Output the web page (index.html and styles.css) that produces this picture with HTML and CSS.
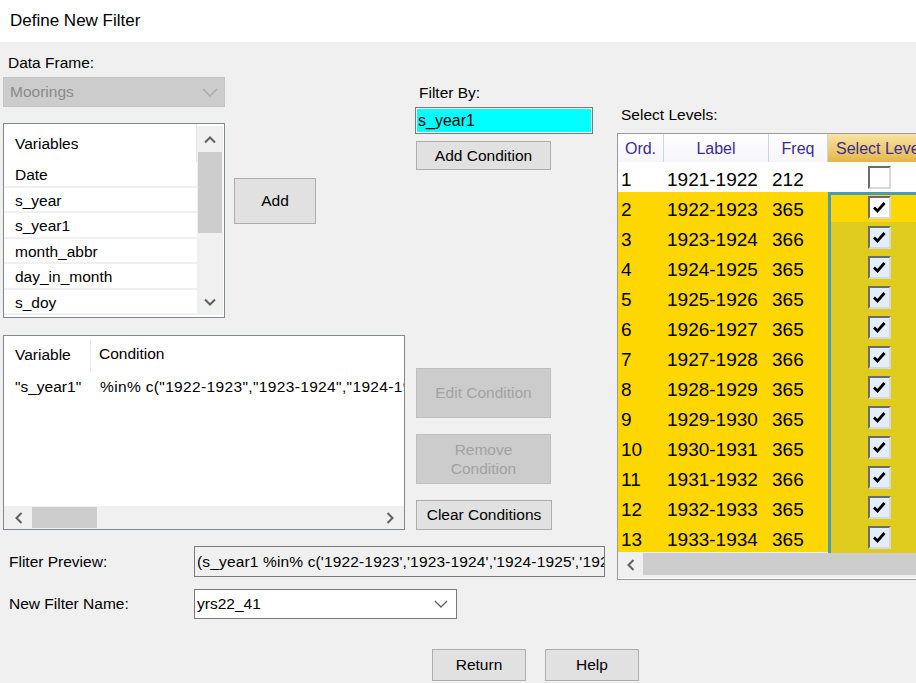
FILE: index.html
```html
<!DOCTYPE html>
<html>
<head>
<meta charset="utf-8">
<title>Define New Filter</title>
<link rel="stylesheet" href="styles.css">
</head>
<body>
<div class="titlebar">Define New Filter</div>
<div class="main">
  <div class="col-left">
    <div class="lbl lbl-df">Data Frame:</div>
    <div class="combo combo-df">
      <span class="combo-text">Moorings</span>
      <svg class="chev-down" width="16" height="9" viewBox="0 0 16 9"><polyline points="1,1 8,8 15,1" fill="none" stroke="#a8a8a8" stroke-width="1.3"/></svg>
    </div>
    <div class="var-row">
      <div class="listbox varlist">
        <div class="vl-content">
          <div class="vl-header">Variables</div>
          <div class="vl-item">Date</div>
          <div class="vl-item">s_year</div>
          <div class="vl-item">s_year1</div>
          <div class="vl-item">month_abbr</div>
          <div class="vl-item">day_in_month</div>
          <div class="vl-item">s_doy</div>
        </div>
        <div class="vscroll">
          <div class="vs-arrow"><svg width="14" height="9" viewBox="0 0 14 9"><polyline points="2,7.5 7,2.5 12,7.5" fill="none" stroke="#606060" stroke-width="2"/></svg></div>
          <div class="vs-thumb"></div>
          <div class="vs-space"></div>
          <div class="vs-arrow"><svg width="14" height="9" viewBox="0 0 14 9"><polyline points="2,1.5 7,6.5 12,1.5" fill="none" stroke="#606060" stroke-width="2"/></svg></div>
        </div>
      </div>
      <div class="btn btn-add">Add</div>
    </div>
    <div class="listbox condlist">
      <div class="cl-header">
        <div class="cl-c1">Variable</div>
        <div class="cl-c2">Condition</div>
      </div>
      <div class="cl-row">
        <div class="cl-c1">"s_year1"</div>
        <div class="cl-c2"><span class="cl-cond">%in% c("1922-1923","1923-1924","1924-1925","1925-1926")</span></div>
      </div>
      <div class="cl-space"></div>
      <div class="hscroll">
        <div class="hs-arrow"><svg width="9" height="14" viewBox="0 0 9 14"><polyline points="7.5,2 2.5,7 7.5,12" fill="none" stroke="#606060" stroke-width="2"/></svg></div>
        <div class="hs-thumb"></div>
        <div class="hs-space"></div>
        <div class="hs-arrow"><svg width="9" height="14" viewBox="0 0 9 14"><polyline points="1.5,2 6.5,7 1.5,12" fill="none" stroke="#606060" stroke-width="2"/></svg></div>
      </div>
    </div>
  </div>

  <div class="col-mid">
    <div class="lbl lbl-fb">Filter By:</div>
    <div class="cyanbox">s_year1</div>
    <div class="btn btn-addcond">Add Condition</div>
    <div class="btn btn-dis btn-edit">Edit Condition</div>
    <div class="btn btn-dis btn-remove">Remove<br>Condition</div>
    <div class="btn btn-clear">Clear Conditions</div>
  </div>

  <div class="col-right">
    <div class="lbl lbl-sl">Select Levels:</div>
    <div class="dg">
      <div class="dg-head">
        <div class="dh">Ord.</div>
        <div class="dh">Label</div>
        <div class="dh">Freq</div>
        <div class="dh dh-sel">Select Levels</div>
      </div>
      <div class="dg-row r-white">
        <div class="dc">1</div><div class="dc">1921-1922</div><div class="dc">212</div>
        <div class="dc dc-sel"><span class="cb"></span></div>
      </div>
      <div class="dg-row r-gold r-current">
        <div class="dc">2</div><div class="dc">1922-1923</div><div class="dc">365</div>
        <div class="dc dc-sel"><span class="cb cb-white"><svg width="19" height="19" viewBox="0 0 19 19"><polyline points="4,9.5 7.5,13 14.5,5" fill="none" stroke="#000" stroke-width="2.8"/></svg></span></div>
      </div>
      <div class="dg-row r-gold">
        <div class="dc">3</div><div class="dc">1923-1924</div><div class="dc">366</div>
        <div class="dc dc-sel"><span class="cb cb-on"><svg width="19" height="19" viewBox="0 0 19 19"><polyline points="4,9.5 7.5,13 14.5,5" fill="none" stroke="#000" stroke-width="2.8"/></svg></span></div>
      </div>
      <div class="dg-row r-gold">
        <div class="dc">4</div><div class="dc">1924-1925</div><div class="dc">365</div>
        <div class="dc dc-sel"><span class="cb cb-on"><svg width="19" height="19" viewBox="0 0 19 19"><polyline points="4,9.5 7.5,13 14.5,5" fill="none" stroke="#000" stroke-width="2.8"/></svg></span></div>
      </div>
      <div class="dg-row r-gold">
        <div class="dc">5</div><div class="dc">1925-1926</div><div class="dc">365</div>
        <div class="dc dc-sel"><span class="cb cb-on"><svg width="19" height="19" viewBox="0 0 19 19"><polyline points="4,9.5 7.5,13 14.5,5" fill="none" stroke="#000" stroke-width="2.8"/></svg></span></div>
      </div>
      <div class="dg-row r-gold">
        <div class="dc">6</div><div class="dc">1926-1927</div><div class="dc">365</div>
        <div class="dc dc-sel"><span class="cb cb-on"><svg width="19" height="19" viewBox="0 0 19 19"><polyline points="4,9.5 7.5,13 14.5,5" fill="none" stroke="#000" stroke-width="2.8"/></svg></span></div>
      </div>
      <div class="dg-row r-gold">
        <div class="dc">7</div><div class="dc">1927-1928</div><div class="dc">366</div>
        <div class="dc dc-sel"><span class="cb cb-on"><svg width="19" height="19" viewBox="0 0 19 19"><polyline points="4,9.5 7.5,13 14.5,5" fill="none" stroke="#000" stroke-width="2.8"/></svg></span></div>
      </div>
      <div class="dg-row r-gold">
        <div class="dc">8</div><div class="dc">1928-1929</div><div class="dc">365</div>
        <div class="dc dc-sel"><span class="cb cb-on"><svg width="19" height="19" viewBox="0 0 19 19"><polyline points="4,9.5 7.5,13 14.5,5" fill="none" stroke="#000" stroke-width="2.8"/></svg></span></div>
      </div>
      <div class="dg-row r-gold">
        <div class="dc">9</div><div class="dc">1929-1930</div><div class="dc">365</div>
        <div class="dc dc-sel"><span class="cb cb-on"><svg width="19" height="19" viewBox="0 0 19 19"><polyline points="4,9.5 7.5,13 14.5,5" fill="none" stroke="#000" stroke-width="2.8"/></svg></span></div>
      </div>
      <div class="dg-row r-gold">
        <div class="dc">10</div><div class="dc">1930-1931</div><div class="dc">365</div>
        <div class="dc dc-sel"><span class="cb cb-on"><svg width="19" height="19" viewBox="0 0 19 19"><polyline points="4,9.5 7.5,13 14.5,5" fill="none" stroke="#000" stroke-width="2.8"/></svg></span></div>
      </div>
      <div class="dg-row r-gold">
        <div class="dc">11</div><div class="dc">1931-1932</div><div class="dc">366</div>
        <div class="dc dc-sel"><span class="cb cb-on"><svg width="19" height="19" viewBox="0 0 19 19"><polyline points="4,9.5 7.5,13 14.5,5" fill="none" stroke="#000" stroke-width="2.8"/></svg></span></div>
      </div>
      <div class="dg-row r-gold">
        <div class="dc">12</div><div class="dc">1932-1933</div><div class="dc">365</div>
        <div class="dc dc-sel"><span class="cb cb-on"><svg width="19" height="19" viewBox="0 0 19 19"><polyline points="4,9.5 7.5,13 14.5,5" fill="none" stroke="#000" stroke-width="2.8"/></svg></span></div>
      </div>
      <div class="dg-row r-gold">
        <div class="dc">13</div><div class="dc">1933-1934</div><div class="dc">365</div>
        <div class="dc dc-sel"><span class="cb cb-on"><svg width="19" height="19" viewBox="0 0 19 19"><polyline points="4,9.5 7.5,13 14.5,5" fill="none" stroke="#000" stroke-width="2.8"/></svg></span></div>
      </div>
      <div class="dg-hscroll">
        <div class="dgs-arrow"><svg width="9" height="14" viewBox="0 0 9 14"><polyline points="7.5,2 2.5,7 7.5,12" fill="none" stroke="#606060" stroke-width="2"/></svg></div>
        <div class="dgs-thumb"></div>
      </div>
    </div>
  </div>

  <div class="row-preview">
    <div class="row-lbl">Fliter Preview:</div>
    <div class="previewbox"><span class="pv-text">(s_year1 %in% c('1922-1923','1923-1924','1924-1925','1925-1926'))</span></div>
  </div>
  <div class="row-name">
    <div class="row-lbl">New Filter Name:</div>
    <div class="combo combo-name">
      <span class="combo-text">yrs22_41</span>
      <svg class="chev-down" width="14" height="8" viewBox="0 0 14 8"><polyline points="1,1 7,7 13,1" fill="none" stroke="#606060" stroke-width="1.3"/></svg>
    </div>
  </div>
</div>
<div class="footer">
  <div class="btn btn-foot">Return</div>
  <div class="btn btn-foot">Help</div>
</div>
</body>
</html>
```

FILE: styles.css
```css
* { box-sizing: border-box; }
html, body { margin: 0; padding: 0; }
body {
  width: 916px;
  height: 683px;
  overflow: hidden;
  background: #f0f0f0;
  font-family: "Liberation Sans", Arial, sans-serif;
  font-size: 15.5px;
  color: #000;
}
.titlebar {
  height: 42px;
  background: #fff;
  line-height: 41px;
  padding-left: 10px;
  font-size: 17px;
}
.main {
  display: grid;
  grid-template-columns: 402px 212px 299px;
  padding-left: 3px;
  align-items: start;
}
.col-left { grid-column: 1; grid-row: 1; padding-top: 12px; }
.col-mid { grid-column: 2; grid-row: 1; padding-top: 42px; padding-left: 10px; }
.col-right { grid-column: 3; grid-row: 1 / span 3; padding-top: 64px; }

.lbl { height: 18px; line-height: 18px; white-space: nowrap; }
.lbl-df { padding-left: 5px; }
.lbl-fb { padding-left: 4px; }
.lbl-sl { padding-left: 4px; }

/* combos */
.combo {
  display: flex;
  align-items: center;
  justify-content: space-between;
  height: 30px;
}
.combo-df {
  margin-top: 5px;
  width: 222px;
  background: #cccccc;
  border: 1px solid #c4c4c4;
  color: #8a8a8a;
  padding: 0 6px 0 6px;
}
.combo-name {
  width: 263px;
  background: #fff;
  border: 1px solid #7a7a7a;
  padding: 0 8px 0 2px;
}

/* variables list */
.var-row { display: flex; align-items: flex-start; margin-top: 16px; }
.listbox { background: #fff; border: 1px solid #828790; }
.varlist { width: 222px; height: 195px; display: flex; }
.vl-content { width: 193px; }
.vl-header {
  height: 38px;
  line-height: 39px;
  padding-left: 11px;
  border-right: 1px solid #e5e5e5;
}
.vl-item {
  height: 25.5px;
  line-height: 26px;
  padding-left: 11px;
  border-bottom: 2px solid #f0f0f0;
  overflow: hidden;
}
.vscroll {
  width: 26px;
  margin: 2px 0;
  background: #f0f0f0;
  display: flex;
  flex-direction: column;
}
.vs-arrow { height: 26px; display: flex; align-items: center; justify-content: center; }
.vs-thumb { height: 81px; margin: 0 1px; background: #cdcdcd; }
.vs-space { flex: 1; }

.btn {
  background: #e1e1e1;
  border: 1px solid #adadad;
  display: flex;
  align-items: center;
  justify-content: center;
  text-align: center;
  white-space: nowrap;
}
.btn-add { width: 82px; height: 46px; margin-left: 9px; margin-top: 55px; }

/* conditions list */
.condlist {
  width: 402px;
  height: 195px;
  margin-top: 17px;
  display: flex;
  flex-direction: column;
  overflow: hidden;
}
.cl-header { display: flex; height: 36px; line-height: 36px; }
.cl-row { display: flex; height: 28px; line-height: 29px; }
.cl-c1 { width: 87px; padding-left: 11px; flex: none; white-space: nowrap; }
.cl-header .cl-c1 { border-right: 1px solid #e8e8e8; margin-top: 4px; line-height: 30px; height: 32px; }
.cl-c2 { padding-left: 9px; white-space: nowrap; overflow: hidden; flex: 1; min-width: 0; }
.cl-header .cl-c2 { padding-left: 8px; }
.cl-cond { letter-spacing: 0.35px; }
.cl-space { flex: 1; }
.hscroll { height: 23px; background: #f0f0f0; display: flex; }
.hs-arrow { width: 28px; display: flex; align-items: center; justify-content: center; }
.hs-thumb { width: 65px; margin: 1px 0; background: #cdcdcd; }
.hs-space { flex: 1; }

/* middle column */
.cyanbox {
  margin-top: 5px;
  width: 178px;
  height: 27px;
  background: #00ffff;
  border: 1px solid #7a7a7a;
  box-shadow: inset 0 0 0 1px #fff;
  padding-left: 2px;
  line-height: 26px;
  font-size: 16px;
}
.btn-addcond { margin-top: 7px; margin-left: 1px; width: 135px; height: 29px; }
.btn-dis { background: #cccccc; border-color: #bfbfbf; color: #a2a2a2; }
.btn-edit { margin-top: 198px; margin-left: 1px; width: 135px; height: 50px; }
.btn-remove { margin-top: 16px; margin-left: 1px; width: 135px; height: 50px; line-height: 19px; }
.btn-clear { margin-top: 16px; margin-left: 1px; width: 136px; height: 30px; }

/* data grid */
.dg {
  margin-top: 9px;
  width: 330px;
  height: 447px;
  border: 1px solid #9c9c9c;
  background: #fff;
  overflow: hidden;
}
.dg-head, .dg-row {
  display: grid;
  grid-template-columns: 46px 105px 59px 1fr;
}
.dg-head { height: 28px; }
.dh {
  background: linear-gradient(#ffffff, #f5f5fb);
  border-right: 1px solid #c9d6e8;
  color: #3a2d92;
  font-size: 16px;
  line-height: 29px;
  text-align: center;
  white-space: nowrap;
  overflow: hidden;
}
.dh-sel {
  background: linear-gradient(#f9e4a4, #e4b648);
  text-align: left;
  padding-left: 8px;
  border-right: none;
}
.dg-row { height: 30px; font-size: 19px; }
.dc { padding: 4px 0 0 3px; line-height: 27px; white-space: nowrap; }
.r-white { background: #fff; }
.r-gold { background: #ffd700; }
.r-gold .dc-sel { background: #e0cb1f; box-shadow: inset 3px 0 0 #4d9bb2; }
.r-gold.r-current .dc-sel { background: #ffd700; box-shadow: inset 3px 3px 0 #4d9bb2; }
.dc-sel { padding: 0 0 0 40px; display: flex; align-items: center; }
.cb {
  width: 23px;
  height: 23px;
  display: block;
  background: #fff;
  border-top: 2px solid #6b6b6b;
  border-left: 2px solid #6b6b6b;
  border-right: 2px solid #d8d8d8;
  border-bottom: 2px solid #d8d8d8;
}
.cb svg { display: block; }
.cb-on { background: #e2eefb; }
.dg-hscroll { height: 26px; display: flex; background: #f0f0f0; }
.dgs-arrow { width: 25px; display: flex; align-items: center; justify-content: center; }
.dgs-thumb { flex: 1; background: #cdcdcd; margin: 1px 0 3px 0; }

/* bottom rows */
.row-preview {
  grid-column: 1 / 3;
  grid-row: 2;
  margin-top: 16px;
  display: flex;
  align-items: center;
}
.row-name {
  grid-column: 1 / 3;
  grid-row: 3;
  margin-top: 12px;
  display: flex;
  align-items: center;
}
.row-lbl { width: 191px; padding-left: 6px; white-space: nowrap; }
.previewbox {
  width: 411px;
  height: 31px;
  border: 1px solid #7a7a7a;
  background: #f0f0f0;
  padding-left: 2px;
  line-height: 29px;
  white-space: nowrap;
  overflow: hidden;
}
.pv-text { letter-spacing: 0.15px; }

.footer {
  display: flex;
  gap: 19px;
  padding-left: 432px;
  margin-top: 30px;
}
.btn-foot { width: 94px; height: 32px; }
```
